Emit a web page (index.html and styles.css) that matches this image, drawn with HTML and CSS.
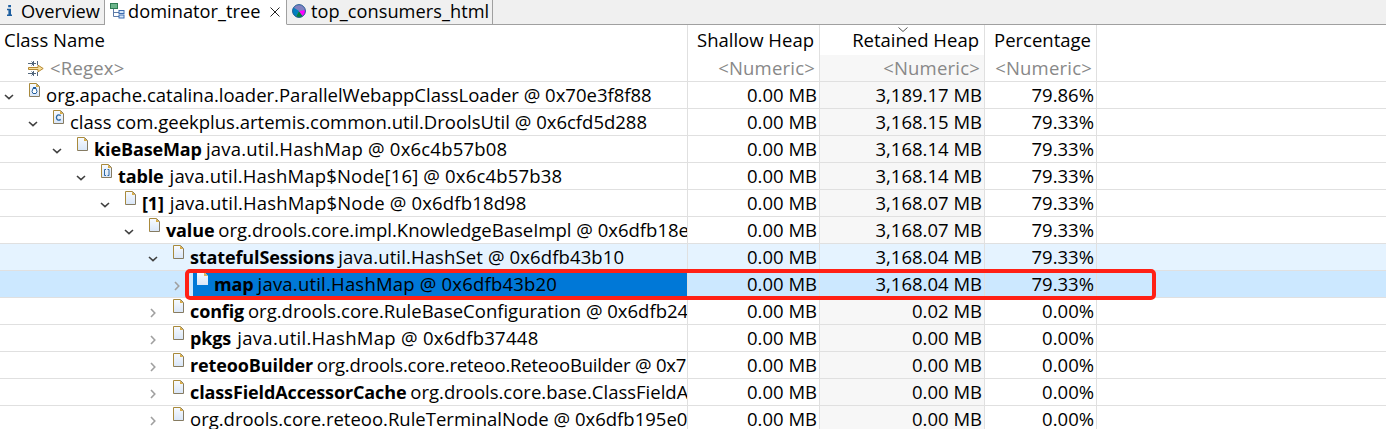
FILE: index.html
```html
<!DOCTYPE html>
<html lang="en">
<head>
<meta charset="utf-8">
<title>dominator_tree</title>
<link rel="stylesheet" href="styles.css">
</head>
<body>
<svg class="defs" width="0" height="0" aria-hidden="true">
  <defs>
    <linearGradient id="paper" x1="0" y1="0" x2="0" y2="1"><stop offset="0" stop-color="#f8fbff"/><stop offset="1" stop-color="#d9e6f8"/></linearGradient>
    <symbol id="page" viewBox="0 0 11 14">
      <path d="M.5 .5H7.5L10.5 3.5V13.5H.5Z" fill="url(#paper)"/>
      <path d="M.5 13.5V.5H7.5" fill="none" stroke="#a98a3c"/>
      <path d="M7.5 .5L10.5 3.5V13.5H.5" fill="none" stroke="#857b62"/>
      <path d="M7 .5V4H10.5Z" fill="#d8ac48"/>
    </symbol>
    <symbol id="page-plain" viewBox="0 0 11 14">
      <path d="M0 0H7L11 4V13H0Z" fill="url(#paper)"/>
      <path d="M7 0V4H11Z" fill="#e0b85a"/>
    </symbol>
    <symbol id="open" viewBox="0 0 10 6"><path d="M1 1L5 4.6L9 1" fill="none" stroke="#404040" stroke-width="1.6"/></symbol>
    <symbol id="closed" viewBox="0 0 6 10"><path d="M1 1L4.8 5L1 9" fill="none" stroke="#a0a0a0" stroke-width="1.6"/></symbol>
  </defs>
</svg>
<div class="view">
  <div class="tabs">
    <div class="tab overview"><svg class="info" viewBox="0 0 5 11"><path d="M1.2 0H4V2.2H1.2ZM0 3.8H4V9.5H5V11H0V9.5H1.4V5.3H0Z" fill="#1e5fa0"/></svg><span>Overview</span></div>
    <div class="tab active"><svg class="tree-icon" viewBox="0 0 15 16"><path d="M3.5 6V13.5H9M3.5 9.5H9" fill="none" stroke="#5c7ba8"/><rect x=".5" y=".5" width="7" height="5" fill="#6cb58b" stroke="#2f7d54"/><rect x="9" y="7.5" width="5" height="3" fill="#d5e6fa" stroke="#3c6cb0"/><rect x="9" y="12" width="5" height="3" fill="#d5e6fa" stroke="#3c6cb0"/></svg><span>dominator_tree</span><svg class="close" viewBox="0 0 10 10"><path d="M.5 .5L9.5 9.5M9.5 .5L.5 9.5" stroke="#222" fill="none"/></svg></div>
    <div class="tab consumers"><svg class="pie" viewBox="0 0 14 14"><circle cx="7" cy="7" r="6.5" fill="#8080c0"/><path d="M7 7L1.5 3.5A6.5 6.5 0 0 0 4 12.8Z" fill="#0080c0"/><path d="M7 7L4 12.8A6.5 6.5 0 0 0 10.8 12.2Z" fill="#008040"/><path d="M7 7L10.8 12.2A6.5 6.5 0 0 0 13.4 6Z" fill="#f0f"/><circle cx="7" cy="7" r="6.4" fill="none" stroke="#245f96"/></svg><span>top_consumers_html</span></div>
  </div>
  <div class="table">
    <div class="row head"><div class="name">Class Name</div><div class="c1">Shallow Heap</div><div class="c2">Retained Heap<svg class="sort" viewBox="0 0 10 6"><path d="M.5 .5L5 4.5L9.5 .5" fill="none" stroke="#555"/></svg></div><div class="c3">Percentage</div><div></div></div>
    <div class="row filter"><div class="name"><svg class="regex" viewBox="0 0 16 15"><path d="M0 2.5H8M0 12.5H8M5.5 0V5M9.5 0V4M5.5 10V15M9.5 11V15M3.5 .5L5.5 2.5L3.5 4.5M3.5 10.5L5.5 12.5L3.5 14.5" stroke="#53677c" fill="none"/><path d="M.5 6.5H10V4.2L15.2 7.5L10 10.8V8.5H.5Z" fill="#f8df9a" stroke="#b58832"/></svg><span class="t">&lt;Regex&gt;</span></div><div class="c1">&lt;Numeric&gt;</div><div class="c2">&lt;Numeric&gt;</div><div class="c3">&lt;Numeric&gt;</div><div></div></div>
    <div class="row"><div class="name d0"><svg class="open"><use href="#open"/></svg><svg class="page" viewBox="0 0 11 14"><use href="#page"/><path d="M4 5.5L5.5 4L7 5.5L8 8.5L7 10.5H4L3 8.5Z" fill="#fff" stroke="#235f9e"/><path d="M4 4H7V6H4Z" fill="#235f9e"/></svg><span class="t">org.apache.catalina.loader.ParallelWebappClassLoader @ 0x70e3f8f88</span></div><div class="c1">0.00 MB</div><div class="c2">3,189.17 MB</div><div class="c3">79.86%</div><div></div></div>
    <div class="row"><div class="name d1"><svg class="open"><use href="#open"/></svg><svg class="page" viewBox="0 0 11 14"><use href="#page"/><path d="M7.7 5.6C5.5 4 3.4 5.3 3.4 7.5S5.5 11 7.7 9.4" fill="none" stroke="#2c69a5" stroke-width="1.3"/></svg><span class="t">class com.geekplus.artemis.common.util.DroolsUtil @ 0x6cfd5d288</span></div><div class="c1">0.00 MB</div><div class="c2">3,168.15 MB</div><div class="c3">79.33%</div><div></div></div>
    <div class="row"><div class="name d2"><svg class="open"><use href="#open"/></svg><svg class="page"><use href="#page"/></svg><span class="t loose"><b>kieBaseMap</b> java.util.HashMap @ 0x6c4b57b08</span></div><div class="c1">0.00 MB</div><div class="c2">3,168.14 MB</div><div class="c3">79.33%</div><div></div></div>
    <div class="row"><div class="name d3"><svg class="open"><use href="#open"/></svg><svg class="page" viewBox="0 0 11 14"><use href="#page"/><path d="M5 5.5H3.5V11.5H5M6.5 5.5H8V11.5H6.5" fill="none" stroke="#2c69a5"/></svg><span class="t wide"><b>table</b> java.util.HashMap$Node[16] @ 0x6c4b57b38</span></div><div class="c1">0.00 MB</div><div class="c2">3,168.14 MB</div><div class="c3">79.33%</div><div></div></div>
    <div class="row"><div class="name d4"><svg class="open"><use href="#open"/></svg><svg class="page"><use href="#page"/></svg><span class="t wide"><b>[1]</b> java.util.HashMap$Node @ 0x6dfb18d98</span></div><div class="c1">0.00 MB</div><div class="c2">3,168.07 MB</div><div class="c3">79.33%</div><div></div></div>
    <div class="row"><div class="name d5"><svg class="open"><use href="#open"/></svg><svg class="page"><use href="#page"/></svg><span class="t"><b>value</b> org.drools.core.impl.KnowledgeBaseImpl @ 0x6dfb18e</span></div><div class="c1">0.00 MB</div><div class="c2">3,168.07 MB</div><div class="c3">79.33%</div><div></div></div>
    <div class="row hover"><div class="name d6"><svg class="open"><use href="#open"/></svg><svg class="page"><use href="#page"/></svg><span class="t semi"><b>statefulSessions</b> java.util.HashSet @ 0x6dfb43b10</span></div><div class="c1">0.00 MB</div><div class="c2">3,168.04 MB</div><div class="c3">79.33%</div><div></div></div>
    <div class="row selected"><div class="name d7"><svg class="closed"><use href="#closed"/></svg><svg class="page"><use href="#page-plain"/></svg><span class="t loose"><b>map</b> java.util.HashMap @ 0x6dfb43b20</span></div><div class="c1">0.00 MB</div><div class="c2">3,168.04 MB</div><div class="c3">79.33%</div><div></div><div class="marker"></div></div>
    <div class="row"><div class="name d6"><svg class="closed"><use href="#closed"/></svg><svg class="page"><use href="#page"/></svg><span class="t"><b>config</b> org.drools.core.RuleBaseConfiguration @ 0x6dfb24</span></div><div class="c1">0.00 MB</div><div class="c2">0.02 MB</div><div class="c3">0.00%</div><div></div></div>
    <div class="row"><div class="name d6"><svg class="closed"><use href="#closed"/></svg><svg class="page"><use href="#page"/></svg><span class="t pkgs"><b>pkgs</b> java.util.HashMap @ 0x6dfb37448</span></div><div class="c1">0.00 MB</div><div class="c2">0.00 MB</div><div class="c3">0.00%</div><div></div></div>
    <div class="row"><div class="name d6"><svg class="closed"><use href="#closed"/></svg><svg class="page"><use href="#page"/></svg><span class="t tight"><b>reteooBuilder</b> org.drools.core.reteoo.ReteooBuilder @ 0x7</span></div><div class="c1">0.00 MB</div><div class="c2">0.00 MB</div><div class="c3">0.00%</div><div></div></div>
    <div class="row"><div class="name d6"><svg class="closed"><use href="#closed"/></svg><svg class="page"><use href="#page"/></svg><span class="t"><b>classFieldAccessorCache</b> org.drools.core.base.ClassFieldAc</span></div><div class="c1">0.00 MB</div><div class="c2">0.00 MB</div><div class="c3">0.00%</div><div></div></div>
    <div class="row"><div class="name d6"><svg class="closed"><use href="#closed"/></svg><svg class="page"><use href="#page"/></svg><span class="t">org.drools.core.reteoo.RuleTerminalNode @ 0x6dfb195e0</span></div><div class="c1">0.00 MB</div><div class="c2">0.00 MB</div><div class="c3">0.00%</div><div></div></div>
  </div>
</div>
</body>
</html>
```
FILE: styles.css
```css
* { box-sizing: border-box; }
body { margin: 0; background: #fff; color: #000; font-family: "Open Sans", "Noto Sans", sans-serif; font-size: 18.5px; line-height: 26px; }
.defs { position: absolute; }
svg { display: block; flex: none; }
.view { width: 1386px; height: 429px; overflow: hidden; }
.tabs { display: flex; height: 25px; font-size: 18.2px; background: #f0f0f0; border-bottom: 1px solid #a0a0a0; }
.tab { display: flex; height: 25px; line-height: 22px; white-space: nowrap; border-right: 1px solid #a0a0a0; border-bottom: 1px solid #a0a0a0; }
.overview { width: 105px; padding-left: 7px; }
.overview span { margin-left: 9px; }
.active { width: 182px; padding-left: 5px; background: #fff; border-bottom-color: #fff; }
.active span { width: 134px; margin-left: 3px; letter-spacing: 0.05px; }
.consumers { width: 206px; padding-left: 5px; }
.consumers span { margin-left: 5px; letter-spacing: 0.05px; }
.info { width: 5px; height: 11px; margin-top: 5px; }
.tree-icon { width: 15px; height: 16px; margin-top: 3px; }
.close { width: 10px; height: 10px; margin: 7px 0 0 8px; }
.pie { width: 14px; height: 14px; margin-top: 4px; }
.row { position: relative; display: grid; grid-template-columns: 688px 132px 165px 112px 1fr; height: 27px; border-bottom: 1px solid #e0e0e0; white-space: pre; }
.row > div:not(.marker) { border-right: 1px solid #e0e0e0; }
.row > div:nth-child(5) { border-right: 0 !important; }
.c1, .c2, .c3 { text-align: right; padding-right: 2px; }
.name { display: flex; overflow: hidden; }
b { font-size: 18px; letter-spacing: -0.12px; margin-right: -1px; }
.loose { letter-spacing: 0.2px; }
.wide { letter-spacing: 0.17px; }
.pkgs { letter-spacing: 0.28px; }
.wide b, .pkgs b { margin-right: 1px; }
.semi { letter-spacing: 0.12px; }
.tight { letter-spacing: -0.2px; }
.head { height: 30px; line-height: 29px; border-bottom: 0; }
.head .name { padding-left: 4px; }
.head .c1, .head .c2, .head .c3 { padding-right: 5px; }
.head .c2 { position: relative; }
.sort { position: absolute; left: 78px; top: 2px; width: 10px; height: 6px; }
.filter { color: #888; line-height: 25px; letter-spacing: 0.2px; }
.filter .name { padding-left: 28px; }
.filter .c1, .filter .c2, .filter .c3 { padding-right: 4px; }
.regex { width: 16px; height: 15px; margin: 6px 6px 0 0; }
.c2 { background: #f7f7f7; }
.head .c2, .hover .c2, .selected .c2 { background: transparent; }
.open { width: 10px; height: 6px; margin: 12px 15px 0 0; }
.closed { width: 6px; height: 10px; margin: 10px 17px 0 2px; }
.page { width: 11px; height: 14px; margin: 1px 6px 0 0; }
.d0 { padding-left: 4px; }
.d1 { padding-left: 28px; }
.d2 { padding-left: 52px; }
.d3 { padding-left: 76px; }
.d4 { padding-left: 100px; }
.d5 { padding-left: 124px; }
.d6 { padding-left: 148px; }
.d7 { padding-left: 172px; }
.hover { background: #e5f3ff; }
.selected { background: #cce8ff; z-index: 1; }
.selected .name { background: linear-gradient(90deg, transparent 193px, #0078d7 193px); }
.marker { position: absolute; left: 185px; top: -2px; width: 971px; height: 31px; border: 4px solid #ff2015; border-radius: 5px; }
```
